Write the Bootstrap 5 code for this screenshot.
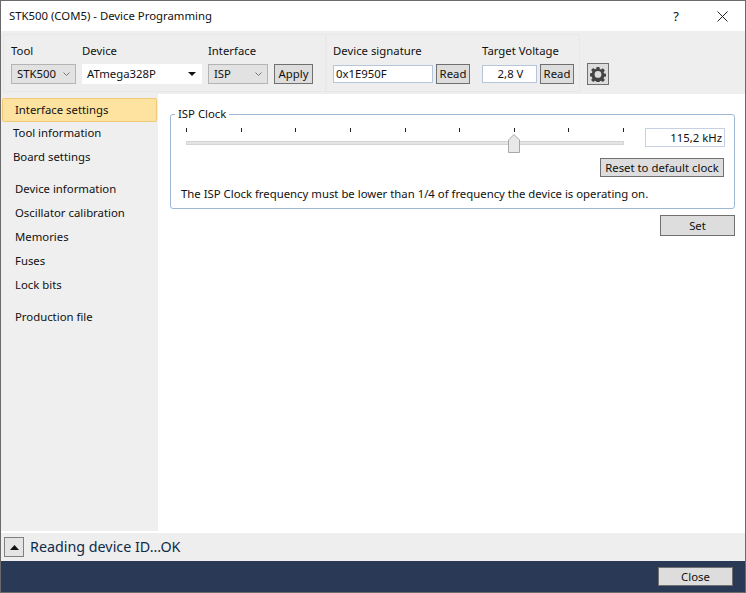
<!DOCTYPE html>
<html lang="en"><head><meta charset="utf-8"><title>Device Programming</title>
<link href="https://cdn.jsdelivr.net/npm/bootstrap@5.3.0/dist/css/bootstrap.min.css" rel="stylesheet">
<style>
html,body{margin:0;height:100%;overflow:hidden;background:#fff}
body{font-family:"Noto Sans","Open Sans",sans-serif;font-size:11.35px;line-height:16px;color:#111}
.win{width:746px;height:593px;border:1px solid #6a6a6a;display:flex;flex-direction:column}
.titlebar{height:30px;padding-left:8px;background:#fff}
.titlebar .tb-q{width:46px;text-align:center;font-size:13px}
.titlebar .tb-x{width:46px;display:flex;justify-content:center}
.toolbar{height:63px;background:#eeeeee;padding:3px 0 0 2px}
.tgroup{border:1px solid #e8e8e8;height:58px;padding:8px 0 0 7px;display:flex}
.tgroup.one{width:323px}
.tgroup.two{width:254px;padding-left:6px}
.tcol{display:flex;flex-direction:column}
.tcol label{height:16px;margin-bottom:5px}
.wbtn{background:#dddddd;border:1px solid #707070;border-radius:0;font:inherit;color:#111;padding:0;height:20px;line-height:18px;text-align:center}
.wsel{height:20px;background:#e2e2e2;border:1px solid #b4b4b4;padding:0 5px;display:flex;align-items:center;justify-content:space-between}
.wsel.white{background:#fff;border-color:#fff;padding-left:4px;padding-right:5px}
.wfield{height:18px;margin-top:1px;background:#fff;border:1px solid #b5c5dc;line-height:16px;padding-left:2px}
.gearbtn{width:22px;height:22px;margin:29px 0 0 7px;background:#dddddd;border:1px solid #707070;display:flex;align-items:center;justify-content:center}
.mainrow{height:437px;display:flex}
.sidebar{width:157px;background:#efefef;padding-top:4px}
.navi{height:24px;padding-left:14px;line-height:22px}
.navi.alt{padding-left:12px}
.navi.sel{background:#fee29f;border:1px solid #f0c878;border-radius:2px;margin:0 1px;padding-left:12px;line-height:22px}
.gapper{height:8px}
.content{flex:1;background:#fff;padding:0 10px 0 12px;position:relative}
.fs{position:relative;margin-top:20px;height:95px;border:1px solid #9db9d6;border-radius:3px;padding:0 10px}
.fs-title{position:absolute;top:-9px;left:4px;background:#fff;padding:0 3px;line-height:16px}
.slider-zone{width:438px;margin-left:5px;position:relative;height:31px}
.ticks{display:flex;justify-content:space-between;padding-top:13px}
.ticks i{display:block;width:1px;height:4px;background:#222}
.trackbar{position:absolute;left:0;right:0;top:26px;height:4px;background:#e4e4e4;border:1px solid #d4d4d4}
.thumbsvg{position:absolute;left:322px;top:19px}
.freq{position:absolute;right:9px;top:13px;width:80px;height:19px;border:1px solid #c6d2e4;text-align:right;padding-right:2px;line-height:17px;background:#fff}
.resetrow{display:flex;justify-content:flex-end;margin-top:12px}
.resetrow .wbtn{width:124px;height:19px;line-height:17px}
.note{margin-top:9px}
.setrow{display:flex;justify-content:flex-end;margin-top:6px}
.setrow .wbtn{width:75px;height:21px;line-height:19px}
.statusline{height:28px;margin-top:2px;background:#eeeeee;display:flex;align-items:center;padding-left:3px;font-size:14.3px;color:#0f2a4a}
.upbtn{width:20px;height:20px;background:#e4e4e4;border:1px solid #808080;display:flex;align-items:center;justify-content:center;margin-right:6px}
.bottombar{flex:1;background:#2a3a56;display:flex;justify-content:flex-end;padding:6px 12px 0 0}
.bottombar .wbtn{width:75px;height:19px;line-height:17px}
</style></head><body>
<div class="win">
 <div class="titlebar d-flex align-items-center">
  <span class="flex-grow-1">STK500 (COM5) - Device Programming</span>
  <span class="tb-q">?</span>
  <span class="tb-x"><svg width="11" height="11" viewBox="0 0 11 11"><path d="M.5.5l10 10M10.500.5l-10 10" stroke="#222" fill="none"/></svg></span>
 </div>
 <div class="toolbar d-flex">
  <div class="tgroup one">
   <div class="tcol" style="width:71px"><label>Tool</label><div class="wsel" style="width:65px"><span>STK500</span><svg width="7" height="4" viewBox="0 0 7 4"><path d="M.5.5L3.500 3.500 6.500.5" stroke="#777" fill="none"/></svg></div></div>
   <div class="tcol" style="width:126px"><label>Device</label><div class="wsel white" style="width:120px"><span>ATmega328P</span><svg width="8" height="4" viewBox="0 0 8 4"><path d="M0 0h8L4 4z" fill="#111"/></svg></div></div>
   <div class="tcol" style="width:66px"><label>Interface</label><div class="wsel" style="width:60px"><span>ISP</span><svg width="7" height="4" viewBox="0 0 7 4"><path d="M.5.5L3.500 3.500 6.500.5" stroke="#777" fill="none"/></svg></div></div>
   <div class="tcol"><label>&nbsp;</label><button class="wbtn" style="width:39px">Apply</button></div>
  </div>
  <div class="tgroup two">
   <div class="tcol" style="width:149px"><label>Device signature</label><div class="d-flex"><div class="wfield" style="width:100px">0x1E950F</div><button class="wbtn" style="width:34px;margin-left:3px">Read</button></div></div>
   <div class="tcol"><label>Target Voltage</label><div class="d-flex"><div class="wfield text-center" style="width:55px">2,8 V</div><button class="wbtn" style="width:34px;margin-left:3px">Read</button></div></div>
  </div>
  <div class="gearbtn"><svg width="16" height="16" viewBox="0 0 18 18"><path d="M7.400 1h3.200l.4 2.400 1.500.6 2-1.400 2.200 2.300-1.400 2 .6 1.500 2.300.4v3l-2.300.4-.6 1.500 1.400 2-2.200 2.200-2-1.400-1.500.6-.4 1.900H7.400l-.4-1.900-1.500-.6-2 1.400-2.200-2.200 1.400-2-.6-1.500L0 11.400v-3l2.100-.4.6-1.500-1.400-2 2.200-2.300 2 1.400 1.500-.6z" fill="#444"/><circle cx="9" cy="9.500" r="3.800" fill="#ddd"/></svg></div>
 </div>
 <div class="mainrow">
  <div class="sidebar">
   <div class="navi sel">Interface settings</div>
   <div class="navi alt">Tool information</div>
   <div class="navi alt">Board settings</div>
   <div class="gapper"></div>
   <div class="navi">Device information</div>
   <div class="navi">Oscillator calibration</div>
   <div class="navi">Memories</div>
   <div class="navi">Fuses</div>
   <div class="navi">Lock bits</div>
   <div class="gapper"></div>
   <div class="navi">Production file</div>
  </div>
  <div class="content">
   <div class="fs">
    <span class="fs-title">ISP Clock</span>
    <div class="slider-zone">
     <div class="ticks"><i></i><i></i><i></i><i></i><i></i><i></i><i></i><i></i><i></i></div>
     <div class="trackbar"></div>
     <svg class="thumbsvg" width="12" height="19" viewBox="0 0 12 19"><path d="M.5 18.500V6L6 .5 11.500 6v12.500z" fill="#e8e8e8" stroke="#a8a8a8"/></svg>
    </div>
    <div class="freq">115,2 kHz</div>
    <div class="resetrow"><button class="wbtn">Reset to default clock</button></div>
    <div class="note">The ISP Clock frequency must be lower than 1/4 of frequency the device is operating on.</div>
   </div>
   <div class="setrow"><button class="wbtn">Set</button></div>
  </div>
 </div>
 <div class="statusline"><div class="upbtn"><svg width="9" height="5" viewBox="0 0 9 5"><path d="M0 5L4.500 0 9 5z" fill="#111"/></svg></div><span>Reading device ID...OK</span></div>
 <div class="bottombar"><button class="wbtn">Close</button></div>
</div>
<script src="https://cdn.jsdelivr.net/npm/bootstrap@5.3.0/dist/js/bootstrap.bundle.min.js"></script>
</body></html>
